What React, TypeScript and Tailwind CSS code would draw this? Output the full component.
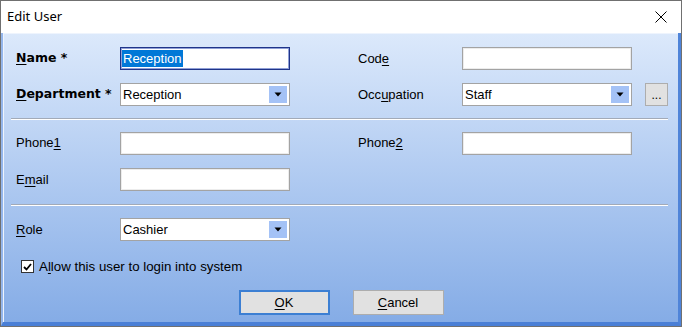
import type { ReactNode } from "react";

const sans = "font-['Liberation_Sans',Arial,sans-serif]";
const boldFont = "font-['DejaVu_Sans',Verdana,sans-serif] font-bold";

const U = ({ children }: { children: ReactNode }) => (
  <span className="underline underline-offset-[2px] decoration-1">{children}</span>
);

const Label = ({ children, bold }: { children: ReactNode; bold?: boolean }) => (
  <span
    className={`w-[104px] shrink-0 text-black ${
      bold ? `${boldFont} text-[12.5px]` : `${sans} text-[13px]`
    }`}
  >
    {children}
  </span>
);

const TextBox = ({ children, focused }: { children?: ReactNode; focused?: boolean }) => (
  <div
    className={`w-[170px] h-[23px] shrink-0 bg-white flex items-center px-[1px] ${
      focused
        ? "border border-[#1f3489] shadow-[inset_0_0_0_1px_#8f9fd6]"
        : "border border-[#a3a3a3] shadow-[inset_0_0_0_1px_#ececec]"
    }`}
  >
    {children}
  </div>
);

const Combo = ({ value }: { value: string }) => (
  <div className="w-[170px] h-[23px] shrink-0 bg-white border border-[#a3a3a3] flex items-stretch p-[1px]">
    <span className={`flex-1 flex items-center pl-[1px] text-[13px] text-black ${sans}`}>
      {value}
    </span>
    <div className="w-[18px] my-[1px] mr-[1px] bg-[#a4c2f6] flex items-center justify-center">
      <svg width="8" height="5" viewBox="0 0 8 5">
        <path d="M0.5 0.5h7L4 4.5z" fill="#000" />
      </svg>
    </div>
  </div>
);

// etched line between the groups
const Separator = () => (
  <div className="-ml-[5px] w-[657px] h-[2px] border-t border-t-[#a2aab8] border-b border-b-white" />
);

export default function App() {
  return (
    <div className="w-[682px] h-[327px] bg-white border border-[#707070] flex flex-col overflow-hidden">
      {/* title bar */}
      <div className="h-[32px] shrink-0 flex items-center justify-between pl-[6px] pr-[14px]">
        <span className="font-['Noto_Sans',sans-serif] text-[13px] text-black">Edit User</span>
        <svg width="12" height="12" viewBox="0 0 12 12">
          <path d="M0.5 0.5L11.5 11.5M11.5 0.5L0.5 11.5" stroke="#000" strokeWidth="1" />
        </svg>
      </div>

      {/* client area */}
      <div className="flex-1 border-l-2 border-l-[#94b6ec] border-r-[3px] border-r-[#4f84d9] border-b-[4px] border-b-[#4a7fd6] bg-gradient-to-b from-[#dce9fb] to-[#85ace6]">
        <div className="h-full border-l border-t border-[#eef4fd] pl-[12px] pt-[13px] flex flex-col">
          <div className="flex items-center h-[23px]">
            <Label bold>
              <U>N</U>ame *
            </Label>
            <TextBox focused>
              <span className={`bg-[#0078d7] text-white text-[13px] leading-[17px] px-[1px] ${sans}`}>
                Reception
              </span>
            </TextBox>
            <div className="w-[68px] shrink-0" />
            <Label>
              Cod<U>e</U>
            </Label>
            <TextBox />
          </div>

          <div className="flex items-center h-[23px] mt-[13px]">
            <Label bold>
              <U>D</U>epartment *
            </Label>
            <Combo value="Reception" />
            <div className="w-[68px] shrink-0" />
            <Label>
              Occ<U>u</U>pation
            </Label>
            <Combo value="Staff" />
            <button className="ml-[13px] w-[23px] h-[23px] bg-[#e1e1e1] border border-[#adadad] flex items-end justify-center pb-[4px]">
              <span className={`text-[12px] leading-none text-black ${sans}`}>...</span>
            </button>
          </div>

          <div className="mt-[12px]">
            <Separator />
          </div>

          <div className="flex items-center h-[24px] mt-[11px]">
            <Label>
              Phone<U>1</U>
            </Label>
            <TextBox />
            <div className="w-[68px] shrink-0" />
            <Label>
              Phone<U>2</U>
            </Label>
            <TextBox />
          </div>

          <div className="flex items-center h-[23px] mt-[13px]">
            <Label>
              E<U>m</U>ail
            </Label>
            <TextBox />
          </div>

          <div className="mt-[13px]">
            <Separator />
          </div>

          <div className="flex items-center h-[23px] mt-[12px]">
            <Label>
              <U>R</U>ole
            </Label>
            <Combo value="Cashier" />
          </div>

          <div className="flex items-center h-[15px] mt-[18px] ml-[5px] gap-[5px]">
            <div className="w-[13px] h-[13px] bg-white border border-[#333] flex items-center justify-center">
              <svg width="9" height="8" viewBox="0 0 9 8">
                <path d="M1 4l2.5 2.5L8 1" stroke="#000" strokeWidth="1.8" fill="none" />
              </svg>
            </div>
            <span className={`text-[13.3px] text-black ${sans}`}>
              A<U>l</U>low this user to login into system
            </span>
          </div>

          <div className="flex justify-center gap-[23px] mt-[16px] -ml-[12px]">
            <button
              className={`w-[91px] h-[25px] bg-[#e1e1e1] border-2 border-[#3c7fd3] text-[13px] text-black ${sans}`}
            >
              <U>O</U>K
            </button>
            <button
              className={`w-[91px] h-[25px] bg-[#e1e1e1] border border-[#adadad] text-[13px] text-black ${sans}`}
            >
              <U>C</U>ancel
            </button>
          </div>
        </div>
      </div>
    </div>
  );
}
